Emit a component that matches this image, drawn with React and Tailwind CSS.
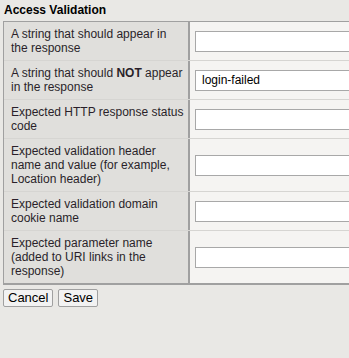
import React, { useState } from 'react';

const rows = [
  { label: <>A string that should appear in the response</>, value: '' },
  { label: <>A string that should <b>NOT</b> appear in the response</>, value: 'login-failed' },
  { label: <>Expected HTTP response status code</>, value: '' },
  { label: <>Expected validation header name and value (for example, Location header)</>, value: '' },
  { label: <>Expected validation domain cookie name</>, value: '' },
  { label: <>Expected parameter name (added to URI links in the response)</>, value: '' },
];

const AccessValidation = () => {
  const [values, setValues] = useState(rows.map((r) => r.value));

  return (
    <div className="w-[349px] h-[358px] overflow-hidden bg-[#e9e8e5] text-[12px] text-[#2a1f2a] font-['Liberation_Sans',Arial,sans-serif]">
      <div className="h-[21px] pl-1 pt-[3px] leading-[15px] font-bold text-black">Access Validation</div>

      {/* form table */}
      <div className="ml-[3px] w-[420px] border-l border-t border-b-2 border-[#a0a0a0]">
        {rows.map((row, i) => (
          <div key={i} className={`flex ${i < rows.length - 1 ? 'border-b border-[#d6d5d2]' : ''}`}>
            <div className="w-[186px] shrink-0 bg-[#e0dfdc] border-r-2 border-[#a0a0a0] pl-[7px] pr-[3px] py-[5px] leading-[14px]">
              {row.label}
            </div>
            <div className="flex-1 bg-[#f5f4f2] flex items-center pl-[5px]">
              <input
                type="text"
                value={values[i]}
                onChange={(e) => {
                  const next = [...values];
                  next[i] = e.target.value;
                  setValues(next);
                }}
                className="w-[220px] h-[21px] bg-white border border-[#a8a8a8] px-[6px] text-[12px] text-black outline-none"
              />
            </div>
          </div>
        ))}
      </div>

      <div className="flex gap-[5px] ml-[3px] mt-[4px]">
        <button className="h-[18px] px-[4px] bg-[#f2f2f2] border border-[#a0a0a0] rounded-[2px] text-[13px] leading-[16px] text-black">
          Cancel
        </button>
        <button className="h-[18px] px-[4px] bg-[#f2f2f2] border border-[#a0a0a0] rounded-[2px] text-[13px] leading-[16px] text-black">
          Save
        </button>
      </div>
    </div>
  );
};

export default AccessValidation;
